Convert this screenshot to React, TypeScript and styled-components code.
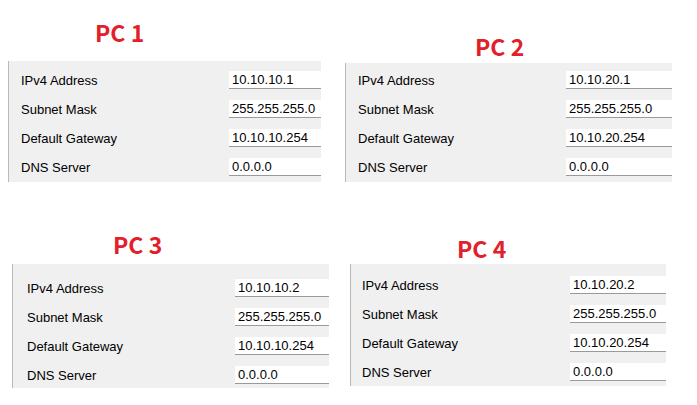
import styled, {createGlobalStyle} from "styled-components";

const GlobalStyle = createGlobalStyle`
  html, body {
    margin: 0;
    padding: 0;
    background: #ffffff;
  }
  body {
    width: 697px;
    height: 405px;
    overflow: hidden;
  }
`

type PcConfig = {
    name: string
    values: string[]
    top: number
    left: number
    width: number
    titleX: number
    titleGap: number
    padTop: number
    padBottom: number
    labelX: number
    fieldX: number
}

const labels = ["IPv4 Address", "Subnet Mask", "Default Gateway", "DNS Server"]

const pcs: PcConfig[] = [
    {name: "PC 1", values: ["10.10.10.1", "255.255.255.0", "10.10.10.254", "0.0.0.0"],
        top: 21, left: 8, width: 313, titleX: 87, titleGap: 17, padTop: 10, padBottom: 6, labelX: 13, fieldX: 221},
    {name: "PC 2", values: ["10.10.20.1", "255.255.255.0", "10.10.20.254", "0.0.0.0"],
        top: 35, left: 0, width: 327, titleX: 130, titleGap: 5, padTop: 8, padBottom: 6, labelX: 13, fieldX: 221},
    {name: "PC 3", values: ["10.10.10.2", "255.255.255.0", "10.10.10.254", "0.0.0.0"],
        top: 33, left: 12, width: 317, titleX: 101, titleGap: 8, padTop: 15, padBottom: 4, labelX: 15, fieldX: 223},
    {name: "PC 4", values: ["10.10.20.2", "255.255.255.0", "10.10.20.254", "0.0.0.0"],
        top: 37, left: 5, width: 316, titleX: 107, titleGap: 4, padTop: 12, padBottom: 5, labelX: 12, fieldX: 220},
]

const Page = styled.div`
  display: grid;
  grid-template-columns: 345px 1fr;
  grid-template-rows: 200px 1fr;
  width: 697px;
  height: 405px;
  align-items: start;
`

const Card = styled.section<{ $top: number, $left: number, $width: number }>`
  display: flex;
  flex-direction: column;
  padding-top: ${p => p.$top}px;
  margin-left: ${p => p.$left}px;
  width: ${p => p.$width}px;
`

const Title = styled.h2<{ $x: number, $gap: number }>`
  margin: 0 0 ${p => p.$gap}px ${p => p.$x}px;
  font-family: "Noto Sans CJK KR", "Noto Sans", sans-serif;
  font-weight: 700;
  font-size: 23px;
  line-height: 23px;
  color: #e3202a;
`

const Panel = styled.div<{ $padTop: number, $padBottom: number }>`
  display: flex;
  flex-direction: column;
  gap: 11px;
  padding: ${p => p.$padTop}px 0 ${p => p.$padBottom}px 0;
  background: #f0f0f0;
  border-left: 1px solid #b9b9b9;
`

const Row = styled.div<{ $labelX: number, $fieldX: number }>`
  display: grid;
  grid-template-columns: ${p => p.$fieldX - 1}px 1fr;
  align-items: center;
  height: 18px;

  & > span {
    padding-left: ${p => p.$labelX - 1}px;
  }
`

const Label = styled.span`
  font-family: "Liberation Sans", Arial, sans-serif;
  font-size: 13px;
  line-height: 15px;
  color: #000000;
`

const Field = styled.div`
  box-sizing: border-box;
  height: 18px;
  padding: 1px 0 0 3px;
  background: #ffffff;
  border-bottom: 1px solid #9a9a9a;
  font-family: "Liberation Sans", Arial, sans-serif;
  font-size: 13px;
  line-height: 15px;
  color: #000000;
`

const App = () => {
    return (
        <>
            <GlobalStyle/>
            <Page>
                {pcs.map(pc => (
                    <Card key={pc.name} $top={pc.top} $left={pc.left} $width={pc.width}>
                        <Title $x={pc.titleX} $gap={pc.titleGap}>{pc.name}</Title>
                        <Panel $padTop={pc.padTop} $padBottom={pc.padBottom}>
                            {labels.map((label, i) => (
                                <Row key={label} $labelX={pc.labelX} $fieldX={pc.fieldX}>
                                    <Label>{label}</Label>
                                    <Field>{pc.values[i]}</Field>
                                </Row>
                            ))}
                        </Panel>
                    </Card>
                ))}
            </Page>
        </>
    )
}

export default App
